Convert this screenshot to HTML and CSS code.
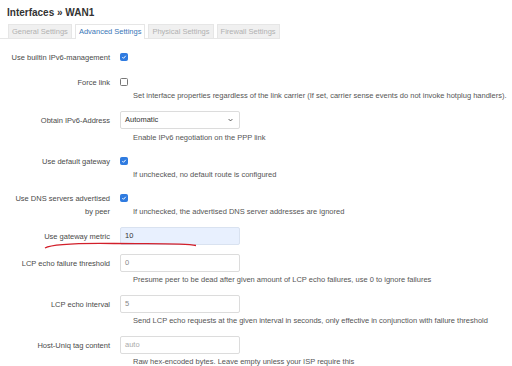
FILE: index.html
```html
<!DOCTYPE html>
<html lang="en">
<head>
    <meta charset="UTF-8">
    <title>Interfaces » WAN1</title>
    <link rel="stylesheet" href="styles.css">
</head>
<body>
    <h2 class="title">Interfaces » WAN1</h2>
    <ul class="tabs">
        <li>General Settings</li>
        <li class="active">Advanced Settings</li>
        <li>Physical Settings</li>
        <li>Firewall Settings</li>
    </ul>

    <div class="form">
        <div class="row">
            <label class="lbl">Use builtin IPv6-management</label>
            <div class="field cb"><span class="check on"><svg viewBox="0 0 10 10"><path d="M2.2 5.2 L4.2 7.2 L7.9 3" /></svg></span></div>
        </div>
        <div class="row">
            <label class="lbl">Force link</label>
            <div class="field cb"><span class="check"></span></div>
            <div class="desc">Set interface properties regardless of the link carrier (If set, carrier sense events do not invoke hotplug handlers).</div>
        </div>
        <div class="row">
            <label class="lbl in">Obtain IPv6-Address</label>
            <div class="field"><div class="select">Automatic<svg class="chev" viewBox="0 0 8 5"><path d="M1 1 L4 4 L7 1" /></svg></div></div>
            <div class="desc sp wide">Enable IPv6 negotiation on the PPP link</div>
        </div>
        <div class="row">
            <label class="lbl">Use default gateway</label>
            <div class="field cb"><span class="check on"><svg viewBox="0 0 10 10"><path d="M2.2 5.2 L4.2 7.2 L7.9 3" /></svg></span></div>
            <div class="desc">If unchecked, no default route is configured</div>
        </div>
        <div class="row">
            <label class="lbl">Use DNS servers advertised<br>by peer</label>
            <div class="field cb"><span class="check on"><svg viewBox="0 0 10 10"><path d="M2.2 5.2 L4.2 7.2 L7.9 3" /></svg></span></div>
            <div class="desc">If unchecked, the advertised DNS server addresses are ignored</div>
        </div>
        <div class="row">
            <label class="lbl in">Use gateway metric</label>
            <div class="field"><div class="input filled">10</div></div>
            <svg class="scribble" viewBox="0 0 160 8"><path d="M1 7 C 8 3, 30 2, 70 2.5 C 110 3, 140 2, 152 4.5" /></svg>
        </div>
        <div class="row">
            <label class="lbl in">LCP echo failure threshold</label>
            <div class="field"><div class="input">0</div></div>
            <div class="desc sp">Presume peer to be dead after given amount of LCP echo failures, use 0 to ignore failures</div>
        </div>
        <div class="row">
            <label class="lbl in">LCP echo interval</label>
            <div class="field"><div class="input">5</div></div>
            <div class="desc sp">Send LCP echo requests at the given interval in seconds, only effective in conjunction with failure threshold</div>
        </div>
        <div class="row">
            <label class="lbl in">Host-Uniq tag content</label>
            <div class="field"><div class="input ph">auto</div></div>
            <div class="desc sp">Raw hex-encoded bytes. Leave empty unless your ISP require this</div>
        </div>
    </div>
</body>
</html>
```

FILE: styles.css
```css
body {
    font-family: "Liberation Sans", Arial, sans-serif;
    background: #fff;
    color: #404040;
    margin: 0;
    font-size: 7.5px;
}
.title {
    margin: 0;
    padding: 6px 0 0 7px;
    font-size: 10px;
    line-height: 13px;
    color: #333;
}
.tabs {
    list-style: none;
    margin: 5px 0 0 0;
    padding: 0 0 0 8px;
    display: flex;
    gap: 3px;
    border-bottom: 1px solid #e6e6e6;
    width: 272px;
}
.tabs li {
    background: #f0f0f0;
    color: #b0b0b0;
    border: 1px solid #e6e6e6;
    border-bottom: none;
    padding: 0 3px;
    line-height: 13px;
}
.tabs li.active {
    background: #fff;
    color: #3a77b7;
    margin-bottom: -1px;
}
.form {
    padding-top: 10px;
}
.row {
    position: relative;
    display: grid;
    grid-template-columns: 110px 1fr;
    column-gap: 10px;
    margin-bottom: 9px;
}
.lbl {
    grid-row: 1 / span 2;
    text-align: right;
    line-height: 13px;
    padding-top: 1.5px;
    color: #4a4a4a;
    white-space: nowrap;
}
.lbl.in {
    padding-top: 2.5px;
}
.field {
    grid-column: 2;
    height: 18px;
}
.field.cb {
    height: 16px;
    display: flex;
    align-items: center;
}
.check {
    box-sizing: border-box;
    width: 8px;
    height: 8px;
    border: 1px solid #777;
    border-radius: 1.5px;
    background: #fff;
}
.check.on {
    background: #2f7be0;
    border-color: #2f7be0;
    display: flex;
}
.check svg {
    width: 100%;
    height: 100%;
    fill: none;
    stroke: #fff;
    stroke-width: 1.6;
}
.desc {
    grid-column: 2;
    padding-left: 13px;
    line-height: 12px;
    color: #555;
    white-space: nowrap;
}
.desc.sp {
    margin-top: 2px;
}
.desc.wide {
    margin-top: 3px;
}
.select, .input {
    box-sizing: border-box;
    width: 120px;
    height: 18px;
    border: 1px solid #dcdcdc;
    border-radius: 2px;
    padding: 0 4px;
    line-height: 16px;
    display: flex;
    align-items: center;
    color: #333;
}
.select {
    justify-content: space-between;
    padding-right: 6px;
}
.chev {
    width: 5px;
    height: 4px;
    fill: none;
    stroke: #444;
    stroke-width: 1.4;
}
.input {
    color: #888;
}
.input.ph {
    color: #aaa;
}
.input.filled {
    background: #e8f0fe;
    border-color: #d9e2f0;
    color: #333;
}
.scribble {
    position: absolute;
    left: 44px;
    top: 14px;
    width: 160px;
    height: 8px;
    fill: none;
    stroke: #d21f2a;
    stroke-width: 1.3;
}
```
